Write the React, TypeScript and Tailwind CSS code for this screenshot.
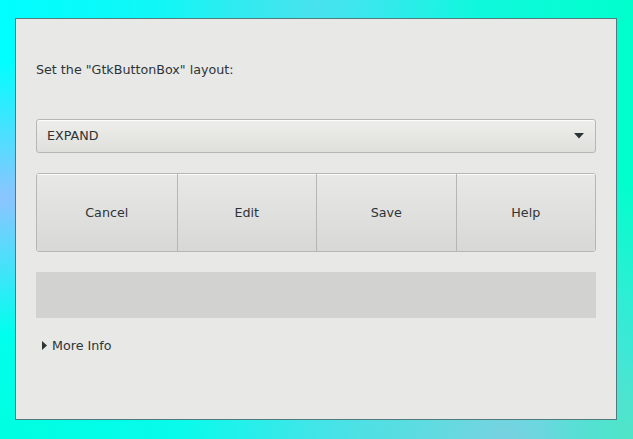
export default function App() {
  const buttons = ['Cancel', 'Edit', 'Save', 'Help']

  return (
    <div className="relative h-[439px] w-[633px] overflow-hidden bg-[radial-gradient(circle_at_100%_100%,#50e4c8_0%,rgba(80,228,200,0)_12%),radial-gradient(ellipse_at_0%_45%,#8cc4ff_0%,rgba(140,196,255,0)_40%),radial-gradient(ellipse_at_50%_0%,#48e2ee_0%,rgba(72,226,238,0)_35%),radial-gradient(ellipse_at_80%_100%,#78d2e0_0%,rgba(120,210,224,0)_45%),radial-gradient(ellipse_at_0%_100%,#00ffe0_0%,rgba(0,255,224,0)_40%),linear-gradient(to_right,#00ffff_0%,#20f0ee_50%,#00ffcc_100%)] pl-[15px] pt-[18px] font-['DejaVu_Sans',sans-serif] text-[12.7px] text-[#2e3436]">
      <div className="flex h-[402px] w-[602px] flex-col border border-[#4f7b7c] bg-[#e8e8e7] px-5">
        <p className="mt-[41px] h-5 leading-5">Set the "GtkButtonBox" layout:</p>

        <button
          type="button"
          className="mt-[39px] flex h-[34px] w-full items-center justify-between rounded-[3px] border border-[#b6b6b3] bg-gradient-to-b from-[#eeeeec] to-[#dfdfdc] pl-[10px] pr-[11px] text-left shadow-[0_1px_0_rgba(255,255,255,0.8)_inset]"
        >
          <span>EXPAND</span>
          <svg width="10" height="6" viewBox="0 0 10 6">
            <path d="M0 0h10L5 5.5z" fill="#2e3436" />
          </svg>
        </button>

        <div className="mt-5 grid h-[79px] w-full grid-cols-4 overflow-hidden rounded-[3px] border border-[#b6b6b3]">
          {buttons.map((b, i) => (
            <button
              key={b}
              type="button"
              className={`flex items-center justify-center bg-gradient-to-b from-[#e8e8e7] to-[#d8d8d6] shadow-[0_1px_0_rgba(255,255,255,0.8)_inset] ${
                i > 0 ? 'border-l border-[#b6b6b3]' : ''
              }`}
            >
              {b}
            </button>
          ))}
        </div>

        <div className="mt-5 h-[46px] w-full bg-[#d2d2d0]" />

        <div className="mt-[18px] flex items-center gap-[5px] pl-[6px]">
          <svg width="5" height="9" viewBox="0 0 5 9">
            <path d="M0 0l5 4.5L0 9z" fill="#2e3436" />
          </svg>
          <span>More Info</span>
        </div>
      </div>
    </div>
  )
}
